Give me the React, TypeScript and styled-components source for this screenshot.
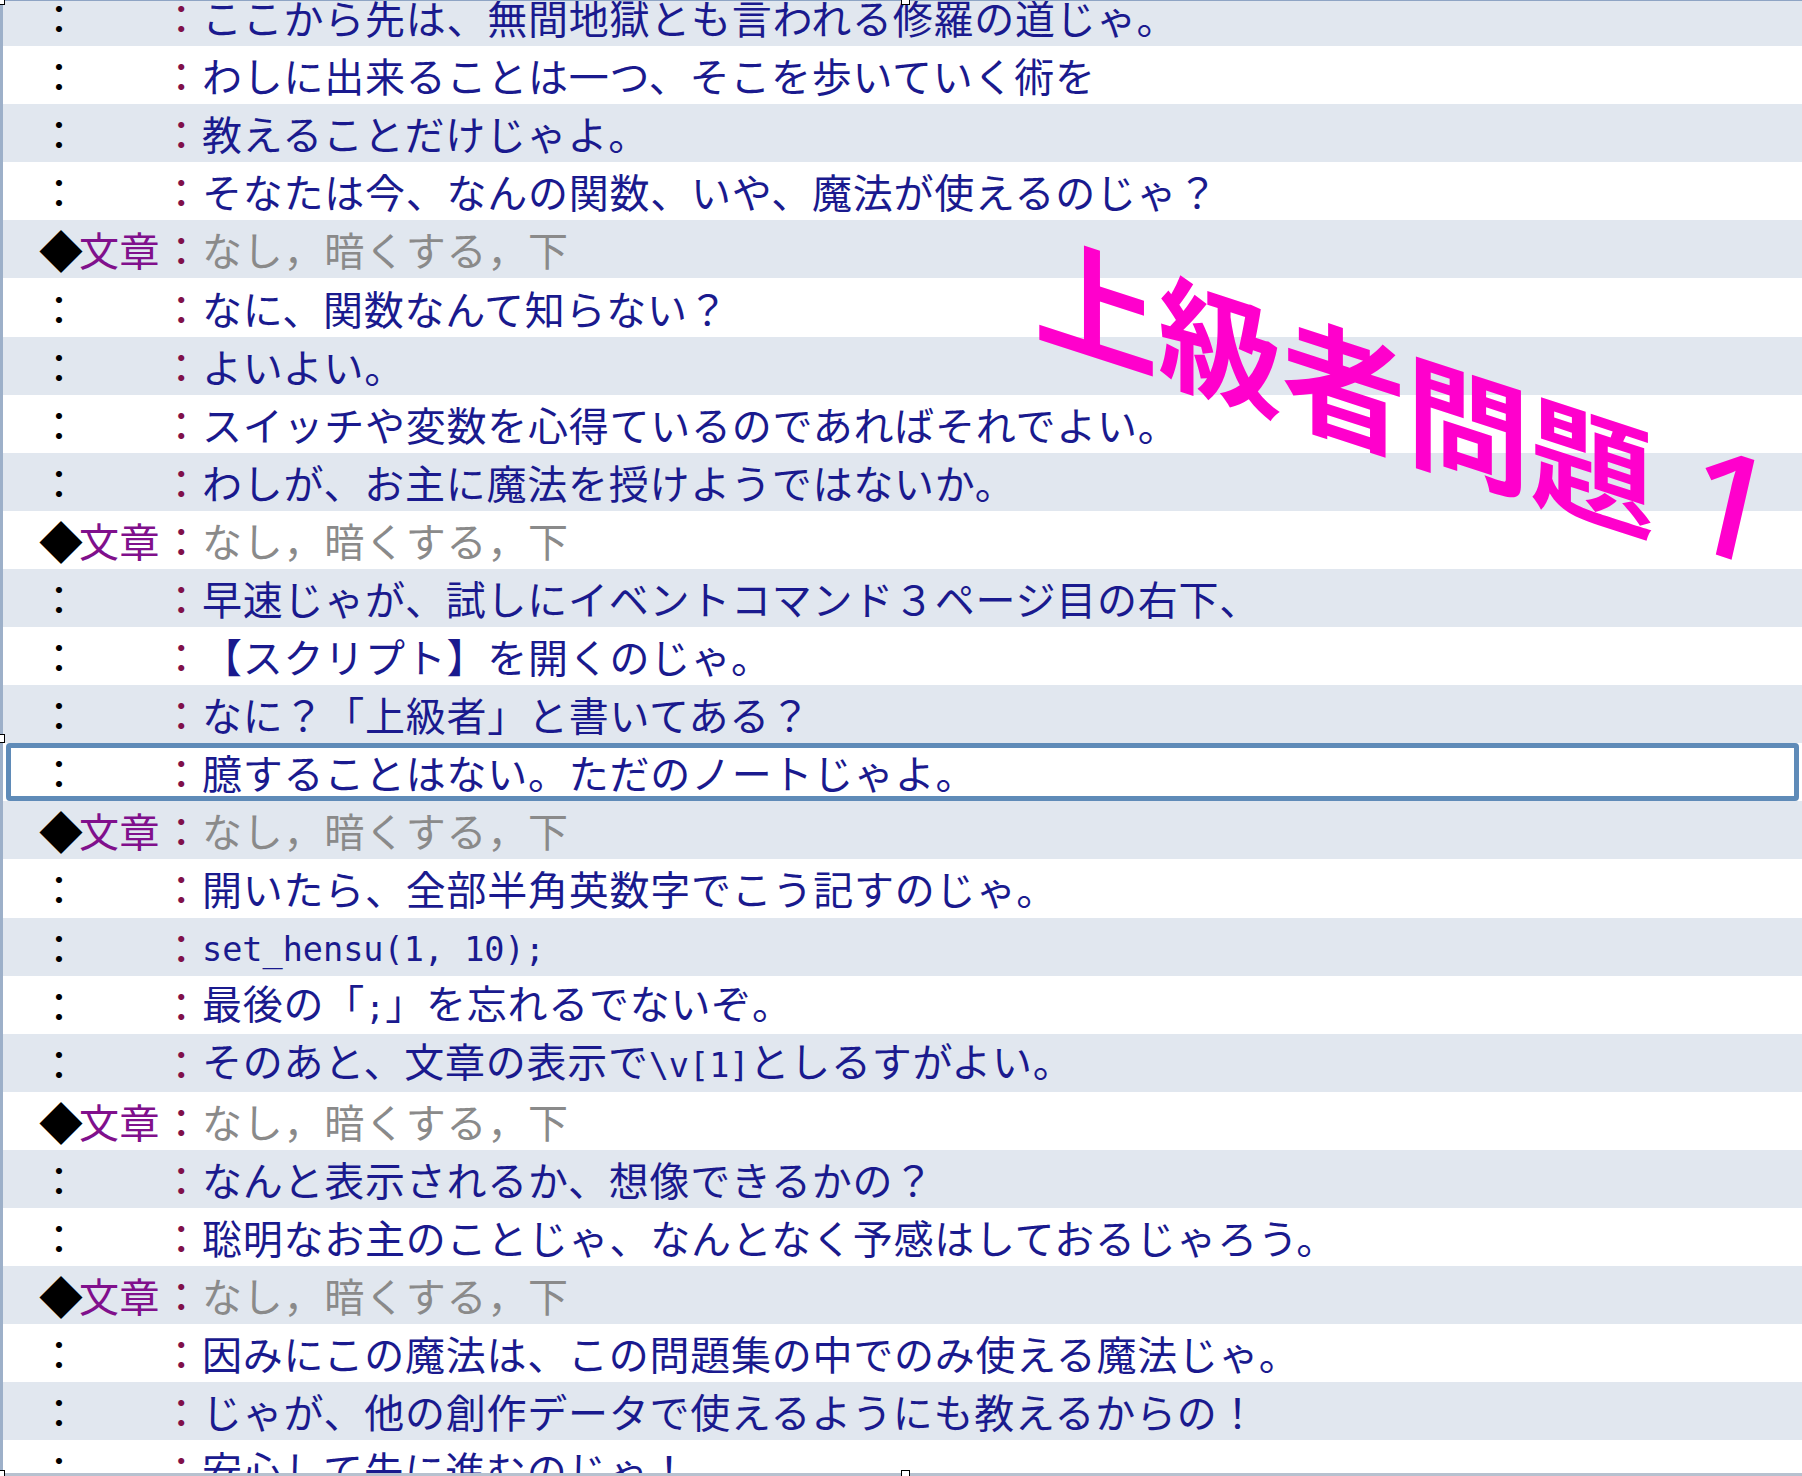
import React from "react";
import styled, { createGlobalStyle } from "styled-components";

const GlobalStyle = createGlobalStyle`
  html, body {
    margin: 0;
    padding: 0;
    background: #ffffff;
  }
  body {
    font-family: "Noto Sans CJK JP", "Noto Sans", sans-serif;
    overflow: hidden;
  }
`;

const Page = styled.div`
  position: relative;
  width: 1802px;
  height: 1476px;
  overflow: hidden;
`;

const Frame = styled.div`
  box-sizing: border-box;
  height: 1476px;
  border-top: 1px solid #8ea4c4;
  border-left: 3px solid #9db0c9;
  border-bottom: 3px solid #b7c1cf;
  overflow: hidden;
`;

const List = styled.div`
  margin-top: -13px;
`;

const Row = styled.div<{ $shade: boolean; $selected?: boolean }>`
  position: relative;
  display: flex;
  align-items: center;
  height: 58.1px;
  padding-left: 36px;
  background: ${(p) => (p.$shade ? "#e1e7ef" : "#ffffff")};
  font-size: 40px;
  line-height: 58px;
  letter-spacing: 0.75px;
  white-space: nowrap;

  ${(p) =>
    p.$selected &&
    `
    &::after {
      content: "";
      position: absolute;
      top: 0;
      bottom: 0;
      left: 3px;
      right: 3px;
      border: 5px solid #5f8bb8;
      border-radius: 4px;
      pointer-events: none;
    }
  `}
`;

const Head = styled.span`
  display: inline-flex;
  width: 122px;
  color: #000000;
  letter-spacing: 0.4px;
`;

const Diamond = styled.span`
  display: inline-block;
  width: 40px;
  text-align: center;
  font-size: 44px;
  color: #000000;
`;

const CmdName = styled.span`
  color: #80108c;
`;

const Colon = styled.span`
  display: inline-block;
  width: 40px;
  text-align: center;
  color: #000000;
`;

const Sep = styled.span`
  display: inline-block;
  width: 41px;
  text-align: center;
  color: #80104a;
`;

const Body = styled.span<{ $params?: boolean }>`
  color: ${(p) => (p.$params ? "#8a8a8a" : "#1a1a8e")};
`;

const Mono = styled.span`
  font-family: "DejaVu Sans Mono", "Liberation Mono", monospace;
  font-size: 33.5px;
  letter-spacing: 0;
`;

const Stamp = styled.div`
  position: absolute;
  left: 1034px;
  top: 200px;
  font-family: "Noto Sans CJK JP", "Noto Sans", sans-serif;
  font-weight: 700;
  font-size: 124px;
  line-height: 1;
  letter-spacing: 0;
  color: #ff00cc;
  white-space: nowrap;
  transform-origin: 0 0;
  transform: skewY(18deg);
  pointer-events: none;
`;

const StampDigit = styled.span`
  display: inline-block;
  margin-left: 34px;
  font-family: "Noto Sans", "Open Sans", sans-serif;
  font-weight: 500;
  font-size: 150px;
  transform: skewX(-12deg);
`;

const Handle = styled.div<{ $x: number; $y: number }>`
  position: absolute;
  left: ${(p) => p.$x}px;
  top: ${(p) => p.$y}px;
  width: 7px;
  height: 7px;
  background: #ffffff;
  border: 1px solid #000000;
`;

type Line = { cmd?: boolean; text?: React.ReactNode };

const PARAMS = "なし，暗くする，下";

const lines: Line[] = [
  { text: "ここから先は、無間地獄とも言われる修羅の道じゃ。" },
  { text: "わしに出来ることは一つ、そこを歩いていく術を" },
  { text: "教えることだけじゃよ。" },
  { text: "そなたは今、なんの関数、いや、魔法が使えるのじゃ？" },
  { cmd: true },
  { text: "なに、関数なんて知らない？" },
  { text: "よいよい。" },
  { text: "スイッチや変数を心得ているのであればそれでよい。" },
  { text: "わしが、お主に魔法を授けようではないか。" },
  { cmd: true },
  { text: "早速じゃが、試しにイベントコマンド３ページ目の右下、" },
  { text: "【スクリプト】を開くのじゃ。" },
  { text: "なに？「上級者」と書いてある？" },
  { text: "臆することはない。ただのノートじゃよ。" },
  { cmd: true },
  { text: "開いたら、全部半角英数字でこう記すのじゃ。" },
  { text: <Mono>set_hensu(1, 10);</Mono> },
  {
    text: (
      <>
        最後の「<Mono>;</Mono>」を忘れるでないぞ。
      </>
    ),
  },
  {
    text: (
      <>
        そのあと、文章の表示で<Mono>\v[1]</Mono>としるすがよい。
      </>
    ),
  },
  { cmd: true },
  { text: "なんと表示されるか、想像できるかの？" },
  { text: "聡明なお主のことじゃ、なんとなく予感はしておるじゃろう。" },
  { cmd: true },
  { text: "因みにこの魔法は、この問題集の中でのみ使える魔法じゃ。" },
  { text: "じゃが、他の創作データで使えるようにも教えるからの！" },
  { text: "安心して先に進むのじゃ！" },
];

const SELECTED = 13;

export default function App() {
  return (
    <>
      <GlobalStyle />
      <Page>
        <Frame>
          <List>
            {lines.map((line, i) => (
              <Row key={i} $shade={i % 2 === 0} $selected={i === SELECTED}>
                {line.cmd ? (
                  <Head>
                    <Diamond>◆</Diamond>
                    <CmdName>文章</CmdName>
                  </Head>
                ) : (
                  <Head>
                    <Colon>：</Colon>
                  </Head>
                )}
                <Sep>：</Sep>
                {line.cmd ? <Body $params>{PARAMS}</Body> : <Body>{line.text}</Body>}
              </Row>
            ))}
          </List>
        </Frame>
        <Stamp>
          上級者問題<StampDigit>1</StampDigit>
        </Stamp>
        <Handle $x={-4} $y={-4} />
        <Handle $x={901} $y={-4} />
        <Handle $x={-4} $y={734} />
        <Handle $x={-4} $y={1470} />
        <Handle $x={901} $y={1470} />
      </Page>
    </>
  );
}
